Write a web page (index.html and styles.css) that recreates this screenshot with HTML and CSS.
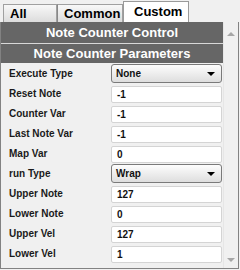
FILE: index.html
```html
<!DOCTYPE html>
<html lang="en">
<head>
    <meta charset="UTF-8">
    <title>Note Counter</title>
    <link rel="stylesheet" href="styles.css">
</head>
<body>
    <div class="tabs">
        <div class="tab tab-all">All</div>
        <div class="tab tab-common">Common</div>
        <div class="tab tab-custom active">Custom</div>
    </div>
    <div class="frame">
        <div class="content">
            <div class="bar bar-top">Note Counter Control</div>
            <div class="bar bar-sub">Note Counter Parameters</div>
            <div class="rows">
                <div class="row">
                    <span class="label">Execute Type</span>
                    <div class="select">None<span class="caret"></span></div>
                </div>
                <div class="row">
                    <span class="label">Reset Note</span>
                    <div class="field">-1</div>
                </div>
                <div class="row">
                    <span class="label">Counter Var</span>
                    <div class="field">-1</div>
                </div>
                <div class="row">
                    <span class="label">Last Note Var</span>
                    <div class="field">-1</div>
                </div>
                <div class="row">
                    <span class="label">Map Var</span>
                    <div class="field">0</div>
                </div>
                <div class="row">
                    <span class="label">run Type</span>
                    <div class="select">Wrap<span class="caret"></span></div>
                </div>
                <div class="row">
                    <span class="label">Upper Note</span>
                    <div class="field">127</div>
                </div>
                <div class="row">
                    <span class="label">Lower Note</span>
                    <div class="field">0</div>
                </div>
                <div class="row">
                    <span class="label">Upper Vel</span>
                    <div class="field">127</div>
                </div>
                <div class="row">
                    <span class="label">Lower Vel</span>
                    <div class="field">1</div>
                </div>
            </div>
        </div>
        <div class="scroll">
            <span class="arrow up"></span>
            <span class="arrow down"></span>
        </div>
    </div>
</body>
</html>
```

FILE: styles.css
```css
body {
    margin: 0;
    width: 240px;
    height: 270px;
    background: #f0f0f0;
    font-family: 'Liberation Sans', Arial, sans-serif;
    font-weight: bold;
    color: #111;
    overflow: hidden;
}

/* Tab strip */
.tabs {
    display: flex;
    align-items: flex-end;
    height: 22px;
    padding-left: 3px;
}

.tab {
    box-sizing: border-box;
    height: 18px;
    padding-left: 6px;
    font-size: 13px;
    line-height: 17px;
    border: 1px solid #a0a0a0;
    border-bottom: none;
    background: linear-gradient(#f8f8f8, #dcdcdc);
    color: #000;
}

.tab-all {
    width: 54px;
}

.tab-common {
    width: 66px;
    border-left-color: #888;
}

.tab-custom {
    width: 66px;
}

.tab.active {
    height: 21px;
    padding-left: 10px;
    line-height: 20px;
    background: #fff;
    border-color: #9a9a9a;
}

/* Main frame */
.frame {
    display: flex;
    height: 247px;
    border: 1px solid #828282;
    border-top: none;
    width: 239px;
    box-sizing: border-box;
}

.content {
    width: 222px;
}

.bar {
    background: #666;
    color: #fff;
    text-align: center;
    font-size: 13px;
}

.bar-top {
    height: 21px;
    line-height: 21px;
    border-bottom: 1px solid #d8d8d8;
}

.bar-sub {
    height: 19px;
    line-height: 19px;
}

.rows {
    display: flex;
    flex-direction: column;
}

.row {
    display: flex;
    align-items: center;
    height: 20px;
}

.label {
    width: 102px;
    padding-left: 8px;
    font-size: 10px;
    color: #1a1a1a;
}

.field {
    box-sizing: border-box;
    width: 111px;
    height: 17px;
    margin-top: 3px;
    padding-left: 5px;
    background: #fff;
    border: 1px solid #d4d4d4;
    border-radius: 2px;
    font-size: 10px;
    line-height: 15px;
}

.select {
    position: relative;
    box-sizing: border-box;
    width: 111px;
    height: 19px;
    margin-top: 1px;
    padding-left: 4px;
    background: linear-gradient(#fdfdfd, #dedede);
    border: 1px solid #7a7a7a;
    border-radius: 3px;
    font-size: 10px;
    line-height: 17px;
}

.caret {
    position: absolute;
    right: 6px;
    top: 7px;
    border-left: 4px solid transparent;
    border-right: 4px solid transparent;
    border-top: 4px solid #000;
}

/* Scrollbar column */
.scroll {
    flex: 1;
    display: flex;
    flex-direction: column;
    justify-content: space-between;
    align-items: center;
    padding: 10px 0 6px;
    background: #f0f0f0;
    border-left: 1px solid #e6e6e6;
}

.arrow {
    width: 0;
    height: 0;
    border-left: 4px solid transparent;
    border-right: 4px solid transparent;
}

.arrow.up {
    border-bottom: 4px solid #a6a6a6;
}

.arrow.down {
    border-top: 4px solid #a6a6a6;
}
```
